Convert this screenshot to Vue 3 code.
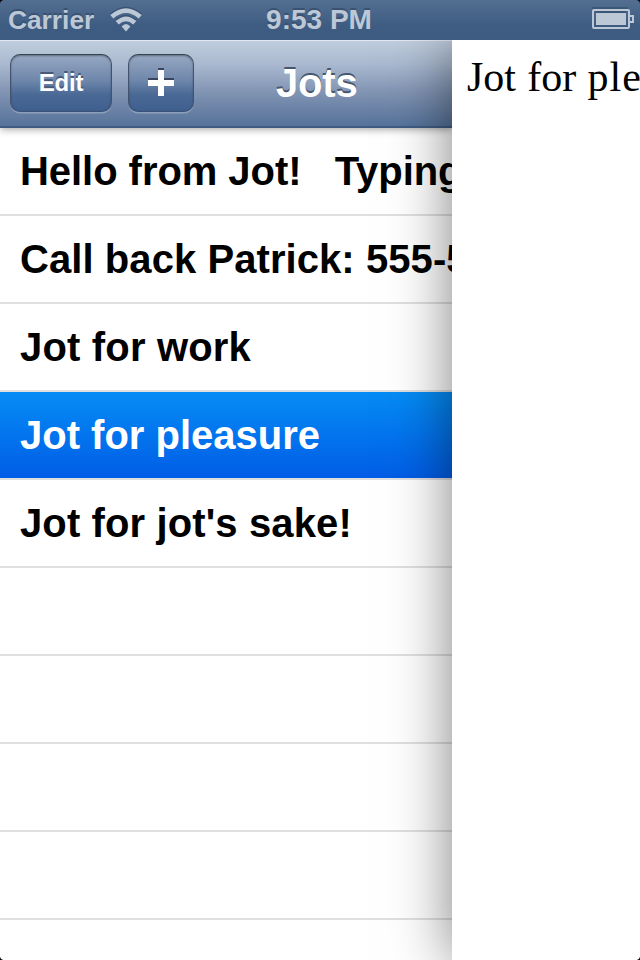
<script setup>
import { computed, ref } from 'vue'

const jots = [
  { text: 'Hello from Jot!   Typing', tracking: -0.05 },
  { text: 'Call back Patrick: 555-5', tracking: 0.07 },
  { text: 'Jot for work', tracking: 0.17 },
  { text: 'Jot for pleasure', tracking: 0 },
  { text: "Jot for jot's sake!", tracking: 0.12 },
  { text: '' }, { text: '' }, { text: '' }, { text: '' }, { text: '' }
]
const selected = ref(3)
const noteWords = computed(() => jots[selected.value].text.split(' '))
</script>

<template>
  <div class="screen">
    <header class="status">
      <div class="network">
        <span class="carrier">Carrier</span>
        <svg class="wifi" width="34" height="26" viewBox="0 0 34 26">
          <g fill="none" stroke="#3a5271" stroke-width="4.6" transform="translate(0 -1.5)">
            <path d="M2.8 10.8 Q17 -1.6 31.2 10.8" />
            <path d="M8.2 16.8 Q17 8.8 25.8 16.8" />
          </g>
          <g fill="none" stroke="#bdc8d6" stroke-width="4.6">
            <path d="M2.8 10.8 Q17 -1.6 31.2 10.8" />
            <path d="M8.2 16.8 Q17 8.8 25.8 16.8" />
            <path d="M12.6 20.6 Q17 15.2 21.4 20.6 L17 25.6 Z" fill="#bdc8d6" stroke="none" />
          </g>
        </svg>
      </div>
      <span class="time">9:53 PM</span>
      <svg class="battery" width="44" height="24" viewBox="0 0 44 24">
        <path d="M2 1H38M6 5H36" stroke="#344c6c" stroke-width="2" opacity=".6" />
        <rect x="3" y="3" width="36" height="18" rx="1" fill="none" stroke="#bdc8d6" stroke-width="2" />
        <path d="M39 9H43V15H39" fill="none" stroke="#bdc8d6" stroke-width="2" />
        <rect x="6" y="6" width="30" height="12" fill="#bdc8d6" />
      </svg>
    </header>

    <main class="body">
      <section class="menu">
        <nav class="navbar">
          <button class="btn edit">Edit</button>
          <button class="btn add" aria-label="Add">
            <svg width="26" height="28" viewBox="0 0 26 28">
              <path d="M10 0H16V10H26V16H0V10H10Z" fill="#37465e" />
              <path d="M10 2H16V12H26V18H16V28H10V18H0V12H10Z" fill="#fff" />
            </svg>
          </button>
          <h1 class="title">Jots</h1>
        </nav>
        <ul class="list">
          <li
            v-for="(jot, i) in jots"
            :key="i"
            class="row"
            :class="{ selected: i === selected }"
            :style="{ letterSpacing: (jot.tracking || 0) + 'px' }"
            @click="jot.text && (selected = i)"
          >{{ jot.text }}</li>
        </ul>
      </section>
      <article class="note">
        <span v-for="(word, i) in noteWords" :key="i" class="word">{{ word }}</span>
      </article>
    </main>

    <i class="corner tl"></i>
    <i class="corner tr"></i>
    <i class="corner bl"></i>
    <i class="corner br"></i>
  </div>
</template>

<style>
body {
  margin: 0;
  overflow: hidden;
}
</style>

<style scoped>
.screen {
  position: relative;
  display: flex;
  flex-direction: column;
  width: 640px;
  height: 960px;
  overflow: hidden;
  background: #fff;
  font-family: "Liberation Sans", Arial, sans-serif;
  font-weight: bold;
}

.status {
  display: grid;
  grid-template-columns: 1fr auto 1fr;
  align-items: center;
  flex: none;
  box-sizing: border-box;
  height: 40px;
  padding: 0 6px 0 8px;
  background: linear-gradient(#536e90, #3e5c82 65%, #3e5b80);
  color: #bdc8d6;
  font-size: 28px;
  line-height: 40px;
  text-shadow: 0 -2px 0 #3a5271;
}

.network {
  display: flex;
  align-items: center;
  gap: 15px;
}

.carrier {
  font-size: 26.3px;
}

.wifi {
  margin-top: -2px;
}

.time {
  padding-right: 4px;
}

.battery {
  justify-self: end;
  margin-top: -2px;
}

.body {
  display: flex;
  flex: 1;
  min-height: 0;
  overflow: hidden;
}

.menu {
  flex: none;
  width: 452px;
  overflow: hidden;
}

.navbar {
  position: relative;
  display: flex;
  align-items: center;
  box-sizing: border-box;
  height: 88px;
  padding: 0 0 2px 10px;
  gap: 16px;
  border-top: 1px solid #e2e8ef;
  border-bottom: 2px solid #3f5b83;
  background: linear-gradient(#c0cddd, #a9b8cf 28%, #8194b3 60%, #56729a);
  box-shadow: 0 1px 8px rgba(0, 0, 0, 0.4);
}

.btn {
  display: flex;
  align-items: center;
  justify-content: center;
  box-sizing: border-box;
  height: 58px;
  padding: 0;
  border: 1.5px solid;
  border-color: #38414f #43536d #3a5279;
  border-radius: 10px;
  background: linear-gradient(#98a9c3, #6f87ab 45%, #4a6995 70%, #3e5e8f);
  background-origin: border-box;
  box-shadow: inset 0 1px 2px rgba(40, 52, 72, 0.5), 0 1.5px 0 rgba(255, 255, 255, 0.25);
  color: #fff;
  font: bold 24px "Liberation Sans", Arial, sans-serif;
  letter-spacing: -0.2px;
  text-shadow: 0 -2px 0 #46597a;
}

.edit {
  width: 102px;
}

.add {
  width: 66px;
}

.add svg {
  margin-top: -1px;
}

.title {
  margin: 0 0 0 66px;
  color: #fff;
  font-size: 40px;
  line-height: 46px;
  letter-spacing: -0.2px;
  text-shadow: 0 -2px 0 #46566e;
}

.list {
  margin: 0;
  padding: 0;
  list-style: none;
}

.row {
  box-sizing: border-box;
  height: 88px;
  padding-left: 20px;
  border-bottom: 2px solid #e0e0e0;
  color: #000;
  font-size: 40px;
  line-height: 87px;
  white-space: pre;
}

.row.selected {
  background: linear-gradient(#058cf5, #015de6) padding-box;
  color: #fff;
}

.note {
  position: relative;
  display: flex;
  gap: 11.2px;
  flex: 1;
  min-width: 0;
  box-sizing: border-box;
  padding: 13px 0 0 15px;
  background: #fff;
  box-shadow: 0 2px 56px rgba(0, 0, 0, 0.5);
  color: #000;
  font: 42px/48px "Liberation Serif", "Times New Roman", serif;
  white-space: nowrap;
}

.word:nth-child(3) {
  letter-spacing: 1.1px;
}

.corner {
  position: absolute;
  width: 4px;
  height: 4px;
}

.tl {
  top: 0;
  left: 0;
  background: radial-gradient(circle at 100% 100%, transparent 3.5px, #000 4.5px);
}

.tr {
  top: 0;
  right: 0;
  background: radial-gradient(circle at 0 100%, transparent 3.5px, #000 4.5px);
}

.bl {
  bottom: 0;
  left: 0;
  background: radial-gradient(circle at 100% 0, transparent 3.5px, #000 4.5px);
}

.br {
  right: 0;
  bottom: 0;
  background: radial-gradient(circle at 0 0, transparent 3.5px, #000 4.5px);
}
</style>
